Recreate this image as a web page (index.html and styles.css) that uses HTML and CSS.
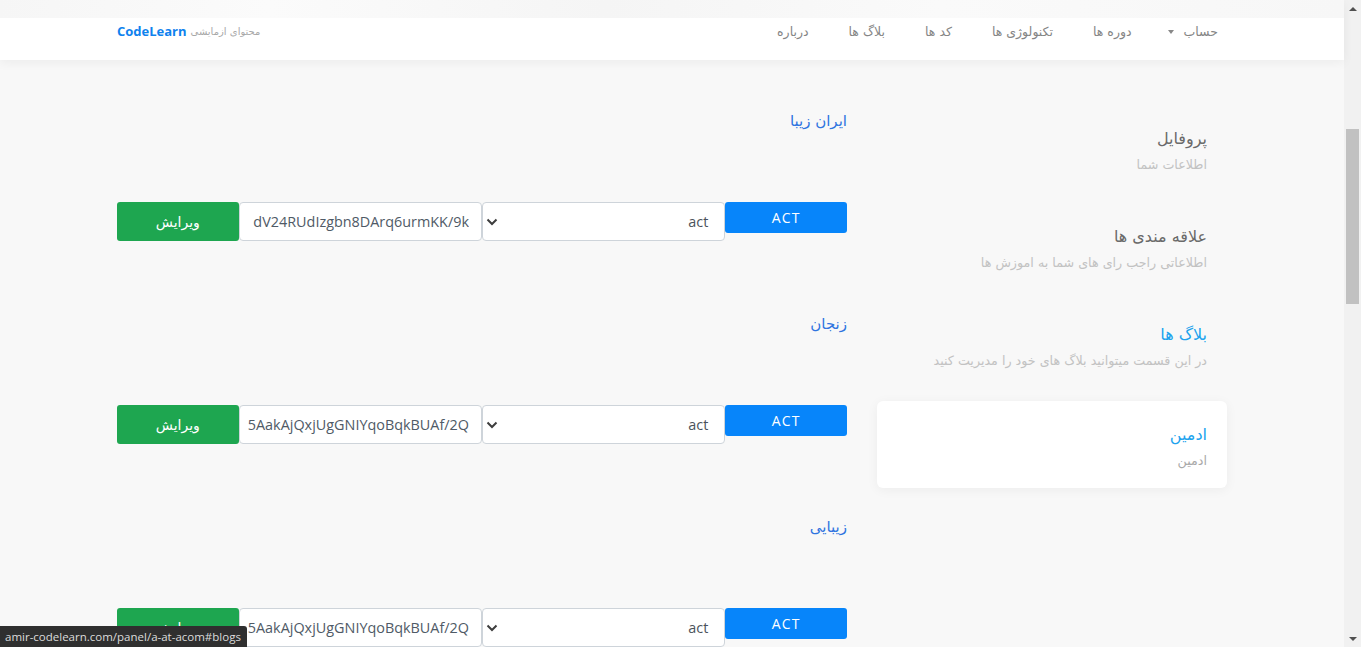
FILE: index.html
```html
<!DOCTYPE html>
<html lang="fa" dir="rtl">
<head>
<meta charset="utf-8">
<title>CodeLearn</title>
<link rel="stylesheet" href="styles.css">
</head>
<body>
<div class="viewport">
  <div class="page">
    <header class="navbar">
      <div class="nav-haze"></div>
      <div class="container nav-inner">
        <ul class="nav-links">
          <li class="nav-item dropdown">حساب <span class="caret"></span></li>
          <li class="nav-item">دوره ها</li>
          <li class="nav-item">تکنولوژی ها</li>
          <li class="nav-item">کد ها</li>
          <li class="nav-item">بلاگ ها</li>
          <li class="nav-item">درباره</li>
        </ul>
        <div class="brand">
          <span class="brand-sub">محتوای ازمایشی</span>
          <span class="brand-name" dir="ltr">CodeLearn</span>
        </div>
      </div>
    </header>

    <main class="container content">
      <aside class="sidebar">
        <div class="side-item">
          <div class="side-title">پروفایل</div>
          <div class="side-sub">اطلاعات شما</div>
        </div>
        <div class="side-item">
          <div class="side-title">علاقه مندی ها</div>
          <div class="side-sub">اطلاعاتی راجب رای های شما به اموزش ها</div>
        </div>
        <div class="side-item">
          <div class="side-title active">بلاگ ها</div>
          <div class="side-sub">در این قسمت میتوانید بلاگ های خود را مدیریت کنید</div>
        </div>
        <div class="side-item card">
          <div class="side-title active">ادمین</div>
          <div class="side-sub card-sub">ادمین</div>
        </div>
      </aside>

      <section class="blogs">
        <div class="blog">
          <div class="blog-title">ایران زیبا</div>
          <div class="blog-form">
            <div class="btn-act">ACT</div>
            <div class="select"><span class="select-val">act</span><svg class="chev" width="12" height="8" viewBox="0 0 12 8"><path d="M1.5 1.5 L6 6 L10.5 1.5" fill="none" stroke="#3d3d3d" stroke-width="2"/></svg></div>
            <div class="input"><div class="input-clip"><span dir="ltr">dV24RUdIzgbn8DArq6urmKK/9k</span></div></div>
            <div class="btn-edit">ویرایش</div>
          </div>
        </div>
        <div class="blog">
          <div class="blog-title">زنجان</div>
          <div class="blog-form">
            <div class="btn-act">ACT</div>
            <div class="select"><span class="select-val">act</span><svg class="chev" width="12" height="8" viewBox="0 0 12 8"><path d="M1.5 1.5 L6 6 L10.5 1.5" fill="none" stroke="#3d3d3d" stroke-width="2"/></svg></div>
            <div class="input"><div class="input-clip"><span dir="ltr">Kx5AakAjQxjUgGNIYqoBqkBUAf/2Q</span></div></div>
            <div class="btn-edit">ویرایش</div>
          </div>
        </div>
        <div class="blog">
          <div class="blog-title">زیبایی</div>
          <div class="blog-form">
            <div class="btn-act">ACT</div>
            <div class="select"><span class="select-val">act</span><svg class="chev" width="12" height="8" viewBox="0 0 12 8"><path d="M1.5 1.5 L6 6 L10.5 1.5" fill="none" stroke="#3d3d3d" stroke-width="2"/></svg></div>
            <div class="input"><div class="input-clip"><span dir="ltr">Kx5AakAjQxjUgGNIYqoBqkBUAf/2Q</span></div></div>
            <div class="btn-edit">ویرایش</div>
          </div>
        </div>
      </section>
    </main>
  </div>

  <div class="scrollbar">
    <div class="sb-btn"><span class="sb-up"></span></div>
    <div class="sb-track"><div class="sb-thumb"></div></div>
    <div class="sb-btn"><span class="sb-down"></span></div>
  </div>

  <div class="status" dir="ltr">amir-codelearn.com/panel/a-at-acom#blogs</div>
</div>
</body>
</html>
```

FILE: styles.css
```css
* { box-sizing: border-box; }

html, body {
  margin: 0;
  height: 100%;
}

body {
  font-family: "DejaVu Sans", sans-serif;
  background: #f8f8f8;
  overflow: hidden;
}

.viewport {
  direction: ltr;
  display: flex;
  height: 647px;
  position: relative;
}

.page {
  direction: rtl;
  flex: 1;
  min-width: 0;
  background: #f8f8f8;
}

.container {
  width: 1110px;
  margin: 0 auto;
}

/* navbar */
.navbar {
  position: relative;
  height: 60px;
  background: #fff;
  box-shadow: 0 3px 10px rgba(0, 0, 0, 0.05);
}

.nav-haze {
  position: absolute;
  top: 0;
  left: 0;
  right: 0;
  height: 18px;
  background: linear-gradient(90deg, #f6f6f6 0%, #fbfbfb 20%, #f5f5f5 45%, #fafafa 70%, #f7f7f7 100%);
}

.nav-inner {
  height: 60px;
  display: flex;
  justify-content: space-between;
  align-items: center;
  padding-top: 2px;
}

.nav-links {
  list-style: none;
  margin: 0;
  padding: 0 9px 0 0;
  display: flex;
  align-items: center;
}

.nav-item {
  font-size: 12.5px;
  color: #858585;
  padding: 0 20px;
  letter-spacing: 0.4px;
}

.nav-item:first-child { padding-right: 0; padding-left: 16px; }

.caret {
  display: inline-block;
  width: 0;
  height: 0;
  border-top: 4px solid #888;
  border-left: 3.5px solid transparent;
  border-right: 3.5px solid transparent;
  vertical-align: middle;
  margin-right: 6px;
}

.brand {
  display: flex;
  align-items: center;
  gap: 4px;
}

.brand-sub {
  font-size: 10px;
  color: #a8a8a8;
}

.brand-name {
  font-family: "Open Sans", sans-serif;
  font-weight: 700;
  font-size: 13px;
  color: #0f82ee;
}

/* content */
.content {
  display: grid;
  grid-template-columns: 350px 730px;
  column-gap: 30px;
  padding-top: 47px;
  align-items: start;
}

.side-item {
  padding: 20px;
  margin-bottom: 10px;
}

.side-title {
  font-size: 16px;
  line-height: 24px;
  color: #6a6a6a;
}

.side-title.active { color: #20a3ee; }

.side-sub {
  margin-top: 4px;
  font-size: 12.7px;
  line-height: 20px;
  color: #c2c2c2;
}

.card {
  background: #fff;
  border-radius: 6px;
  box-shadow: 0 2px 12px rgba(0, 0, 0, 0.05);
  margin-top: 2px;
  padding-top: 22px;
  padding-bottom: 17px;
}

.card-sub { color: #a9a9a9; }

/* blogs */
.blog {
  padding-top: 2px;
  height: 203px;
}

.blog-title {
  font-size: 15px;
  line-height: 24px;
  color: #2f74e0;
}

.blog-form {
  margin-top: 69px;
  display: grid;
  grid-template-columns: minmax(0, 1fr) minmax(0, 2fr) minmax(0, 2fr) minmax(0, 1fr);
  align-items: start;
}

.btn-act {
  height: 31px;
  background: #0785fa;
  color: #fff;
  border-radius: 3px;
  display: flex;
  align-items: center;
  justify-content: center;
  font-family: "Open Sans", sans-serif;
  font-size: 14px;
  letter-spacing: 1.2px;
}

.select, .input {
  height: 39px;
  background: #fff;
  border: 1px solid #ced4da;
  border-radius: 4px;
  font-family: "Open Sans", sans-serif;
  font-size: 14.4px;
  color: #4b535b;
}

.select {
  display: flex;
  align-items: center;
  justify-content: space-between;
  padding: 0 16px 0 3px;
}

.chev { display: block; }

.input {
  padding: 0 12px 0 8px;
  display: flex;
  align-items: center;
  min-width: 0;
}

.input-clip {
  overflow: hidden;
  white-space: nowrap;
  width: 100%;
  direction: rtl;
  text-align: right;
  color: #4f5a66;
}

.btn-edit {
  height: 39px;
  background: #1ea650;
  color: #fff;
  border-radius: 3px;
  display: flex;
  align-items: center;
  justify-content: center;
  font-size: 14px;
  letter-spacing: 1.5px;
}

/* scrollbar */
.scrollbar {
  width: 17px;
  flex: none;
  background: #f1f1f1;
  display: flex;
  flex-direction: column;
}

.sb-btn {
  height: 17px;
  display: flex;
  align-items: center;
  justify-content: center;
}

.sb-up {
  width: 0; height: 0;
  border-bottom: 4px solid #505050;
  border-left: 4px solid transparent;
  border-right: 4px solid transparent;
}

.sb-down {
  width: 0; height: 0;
  border-top: 4px solid #505050;
  border-left: 4px solid transparent;
  border-right: 4px solid transparent;
}

.sb-track {
  flex: 1;
  padding: 112px 2px 0 2px;
}

.sb-thumb {
  height: 175px;
  background: #c1c1c1;
}

/* status tooltip */
.status {
  position: absolute;
  left: 0;
  bottom: 0;
  height: 21px;
  padding: 0 6px 0 5px;
  background: #2f2f2f;
  color: #dcdcdc;
  font-family: "Open Sans", sans-serif;
  font-size: 11.5px;
  line-height: 21px;
  border-top-right-radius: 3px;
}
```
